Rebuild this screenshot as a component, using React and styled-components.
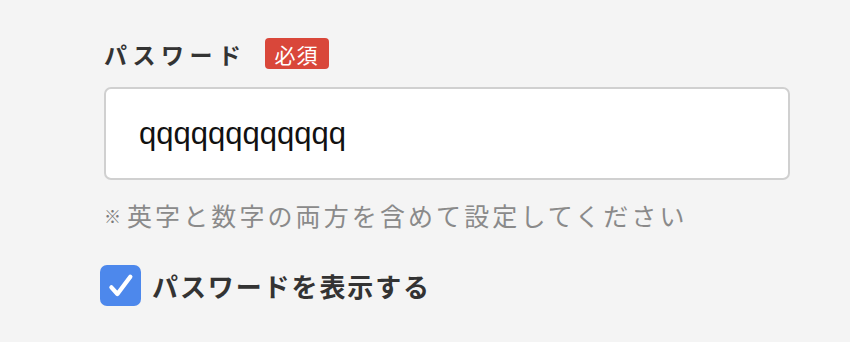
import React, { useState } from "react";
import styled, { createGlobalStyle } from "styled-components";

const GlobalStyle = createGlobalStyle`
  html, body {
    margin: 0;
    padding: 0;
    background: #f4f4f4;
  }
  body {
    font-family: "Noto Sans CJK JP", "Noto Sans", sans-serif;
  }
`;

const Form = styled.div`
  display: flex;
  flex-direction: column;
  padding: 38px 0 0 104px;
  width: 686px;
`;

const LabelRow = styled.div`
  display: flex;
  align-items: center;
  height: 31px;
`;

const Label = styled.label`
  font-size: 23px;
  font-weight: 700;
  color: #333;
  letter-spacing: 5.5px;
`;

const Badge = styled.span`
  display: flex;
  align-items: center;
  justify-content: center;
  margin-left: 18px;
  width: 64px;
  height: 31px;
  border-radius: 4px;
  background: #d9473a;
  color: #fff;
  font-size: 21px;
  letter-spacing: 1px;
`;

const Input = styled.input`
  box-sizing: border-box;
  margin-top: 18px;
  width: 686px;
  height: 93px;
  padding: 0 0 0 33px;
  border: 2px solid #d0d0d0;
  border-radius: 7px;
  background: #fff;
  font-family: "Liberation Sans", Arial, sans-serif;
  font-size: 31px;
  color: #111;
  outline: none;
`;

const Hint = styled.p`
  display: flex;
  align-items: center;
  margin: 18px 0 0;
  height: 34px;
  font-size: 25px;
  color: #8a8a8a;
  letter-spacing: 3.1px;
`;

const Mark = styled.span`
  font-size: 17px;
  font-weight: 700;
  color: #7a7a7a;
  margin-right: 6px;
  letter-spacing: 0;
`;

const CheckRow = styled.label`
  display: flex;
  align-items: center;
  margin: 33px 0 0 -4px;
  cursor: pointer;
`;

const Box = styled.span`
  display: flex;
  align-items: center;
  justify-content: center;
  width: 41px;
  height: 41px;
  border-radius: 7px;
  background: ${(p) => (p.$checked ? "#4d88ec" : "#fff")};
  border: ${(p) => (p.$checked ? "none" : "2px solid #ccc")};
  box-sizing: border-box;
`;

const HiddenCheck = styled.input`
  display: none;
`;

const CheckText = styled.span`
  margin-left: 11px;
  font-size: 26px;
  font-weight: 700;
  color: #333;
  letter-spacing: 1.9px;
`;

export default function App() {
  const [value, setValue] = useState("qqqqqqqqqqqq");
  const [show, setShow] = useState(true);

  return (
    <>
      <GlobalStyle />
      <Form>
        <LabelRow>
          <Label htmlFor="pw">パスワード</Label>
          <Badge>必須</Badge>
        </LabelRow>
        <Input
          id="pw"
          type={show ? "text" : "password"}
          value={value}
          onChange={(e) => setValue(e.target.value)}
        />
        <Hint>
          <Mark>※</Mark>英字と数字の両方を含めて設定してください
        </Hint>
        <CheckRow>
          <HiddenCheck
            type="checkbox"
            checked={show}
            onChange={(e) => setShow(e.target.checked)}
          />
          <Box $checked={show}>
            {show && (
              <svg width="32" height="32" viewBox="0 0 24 24">
                <path
                  d="M4.8 13 L9.3 18 L19 5"
                  fill="none"
                  stroke="#fff"
                  strokeWidth="3.2"
                  strokeLinecap="round"
                  strokeLinejoin="round"
                />
              </svg>
            )}
          </Box>
          <CheckText>パスワードを表示する</CheckText>
        </CheckRow>
      </Form>
    </>
  );
}
